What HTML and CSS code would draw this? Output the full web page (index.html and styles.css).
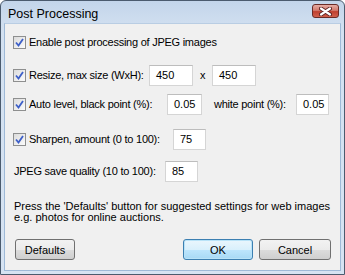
FILE: index.html
```html
<!DOCTYPE html>
<html lang="en">
<head>
    <meta charset="UTF-8">
    <title>Post Processing</title>
    <link rel="stylesheet" href="styles.css">
</head>
<body>
    <div class="window">
        <div class="titlebar">
            <span class="title">Post Processing</span>
            <span class="close">
                <svg width="13" height="9" viewBox="0 0 13 9">
                    <path d="M2 1.5 L11 7.5 M11 1.5 L2 7.5" stroke="#5a2020" stroke-width="4" stroke-linecap="round"/>
                    <path d="M2 1.5 L11 7.5 M11 1.5 L2 7.5" stroke="#fff" stroke-width="2.2" stroke-linecap="round"/>
                </svg>
            </span>
        </div>
        <div class="client">
            <div class="row row-enable">
                <span class="check"><svg width="9" height="9" viewBox="0 0 9 9"><path d="M1 4.5 L3.5 7.5 L8 1" fill="none" stroke="#3d5fc8" stroke-width="1.8"/></svg></span>
                <span>Enable post processing of JPEG images</span>
            </div>
            <div class="row row-resize">
                <span class="check"><svg width="9" height="9" viewBox="0 0 9 9"><path d="M1 4.5 L3.5 7.5 L8 1" fill="none" stroke="#3d5fc8" stroke-width="1.8"/></svg></span>
                <span class="lbl lbl-resize">Resize, max size (WxH):</span>
                <span class="field w44">450</span>
                <span class="times">x</span>
                <span class="field w44">450</span>
            </div>
            <div class="row row-level">
                <span class="check"><svg width="9" height="9" viewBox="0 0 9 9"><path d="M1 4.5 L3.5 7.5 L8 1" fill="none" stroke="#3d5fc8" stroke-width="1.8"/></svg></span>
                <span class="lbl lbl-black">Auto level, black point (%):</span>
                <span class="field w35">0.05</span>
                <span class="lbl lbl-white">white point (%):</span>
                <span class="field w33">0.05</span>
            </div>
            <div class="row row-sharpen">
                <span class="check"><svg width="9" height="9" viewBox="0 0 9 9"><path d="M1 4.5 L3.5 7.5 L8 1" fill="none" stroke="#3d5fc8" stroke-width="1.8"/></svg></span>
                <span class="lbl lbl-sharpen">Sharpen, amount (0 to 100):</span>
                <span class="field w33">75</span>
            </div>
            <div class="row row-quality">
                <span class="lbl lbl-quality">JPEG save quality (10 to 100):</span>
                <span class="field w33">85</span>
            </div>
            <p class="hint">Press the 'Defaults' button for suggested settings for web images<br>e.g. photos for online auctions.</p>
            <div class="buttons">
                <button class="btn btn-defaults">Defaults</button>
                <button class="btn btn-ok">OK</button>
                <button class="btn btn-cancel">Cancel</button>
            </div>
        </div>
    </div>
</body>
</html>
```

FILE: styles.css
```css
body {
    margin: 0;
    background: #fff;
    font-family: "Liberation Sans", Arial, sans-serif;
    font-size: 11px;
    color: #000;
}
.window {
    width: 343px;
    height: 273px;
    border: 1px solid #4b5b6e;
    border-radius: 6px 6px 0 0;
    background: linear-gradient(#c3d5ea, #d3e1f1 30px, #d6e3f2);
    display: flex;
    flex-direction: column;
}
.titlebar {
    height: 22px;
    display: flex;
    align-items: center;
    padding: 0 4px 0 7px;
}
.title {
    flex: 1;
    font-size: 12.5px;
    margin-top: 3px;
}
.close {
    width: 25px;
    height: 12px;
    border: 1px solid #6a2b26;
    border-radius: 3px;
    background: linear-gradient(#e6ada4, #d37a6d 45%, #c0402f 55%, #d0604c);
    display: flex;
    align-items: center;
    justify-content: center;
    margin-top: -2px;
    margin-right: 1px;
}
.client {
    flex: 1;
    margin: 0 3px 3px 3px;
    background: #f0f0f0;
    border: 1px solid #9eb9d7;
    border-top-color: #b9cde3;
    padding: 0 0 0 8px;
}
.row {
    display: flex;
    align-items: center;
    height: 22px;
    letter-spacing: -0.25px;
}
.row-enable { margin-top: 7px; }
.row-resize { margin-top: 11px; }
.row-level { margin-top: 7px; }
.row-sharpen { margin-top: 13px; }
.row-quality { margin-top: 10px; padding-left: 1px; }
.check {
    width: 11px;
    height: 11px;
    border: 1px solid #8e8f8f;
    background: linear-gradient(135deg, #dcdcdc, #fbfbfb);
    display: flex;
    align-items: center;
    justify-content: center;
    margin-right: 3px;
}
.lbl {
    white-space: nowrap;
    flex-shrink: 0;
}
.lbl-resize { width: 120px; }
.lbl-black { width: 138px; }
.lbl-white { width: 82px; margin-left: 12px; }
.lbl-sharpen { width: 144px; }
.lbl-quality { width: 151px; }
.times { width: 19px; text-align: center; }
.field {
    flex-shrink: 0;
    height: 21px;
    box-sizing: border-box;
    border: 1px solid #d5d5d5;
    border-top-color: #bdbdbd;
    background: #fff;
    padding-left: 6px;
    line-height: 19px;
    letter-spacing: 0;
}
.w44 { width: 44px; }
.w35 { width: 35px; }
.w33 { width: 33px; }
.hint {
    margin: 19px 0 0 1px;
    line-height: 11px;
}
.buttons {
    display: flex;
    margin-top: 16px;
    padding-left: 2px;
}
.btn {
    height: 21px;
    font-family: inherit;
    font-size: 11px;
    border: 1px solid #707070;
    border-radius: 3px;
    background: linear-gradient(#f2f2f2, #ebebeb 50%, #dddddd 51%, #cfcfcf);
    padding: 0;
    color: #000;
}
.btn-defaults { width: 60px; }
.btn-ok {
    width: 70px;
    margin-left: auto;
    border-color: #3c7fb1;
    background: linear-gradient(#eaf6fd, #d9f0fc 50%, #bee6fd 51%, #a7d9f5);
    box-shadow: inset 0 0 0 1px #b9e3f8;
}
.btn-cancel {
    width: 72px;
    margin-left: 6px;
    margin-right: 9px;
}
```
